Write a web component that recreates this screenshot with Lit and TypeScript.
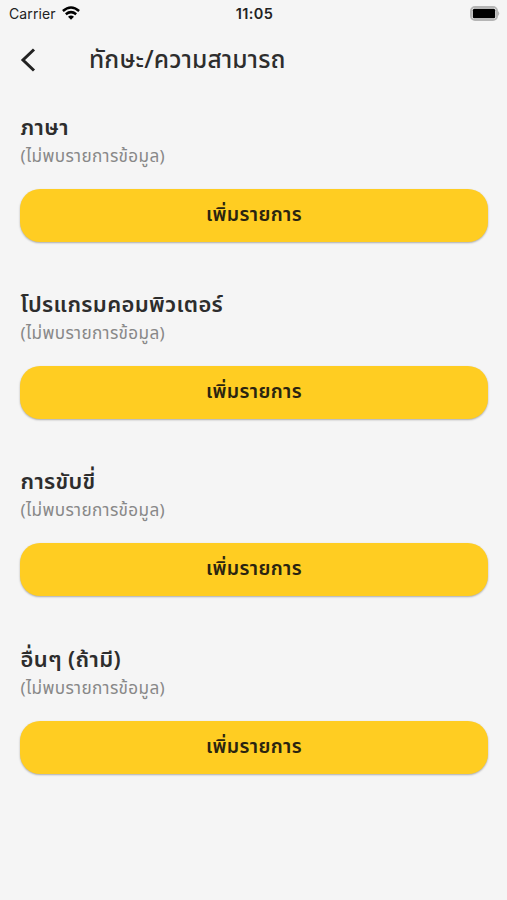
import { LitElement, html, css } from "lit";
import { customElement, property } from "lit/decorators.js";

const font = css`"Noto Sans", "Noto Sans Thai", sans-serif`;

@customElement("status-bar")
class StatusBar extends LitElement {
  static styles = css`
    :host { display: grid; grid-template-columns: 1fr auto 1fr; align-items: center; height: 28px; padding: 0 7px 0 9px; box-sizing: border-box; font: 14px/28px Inter, sans-serif; color: #222; }
    .left { display: flex; align-items: center; gap: 6px; letter-spacing: .1px; }
    .time { font-weight: 600; font-size: 14.5px; letter-spacing: .4px; }
    .battery { justify-self: end; margin-top: -2px; }
    svg { display: block; }
    .wifi { margin-top: -2px; }
  `;
  render() {
    return html`<div class="left"><span>Carrier</span>
      <svg class="wifi" width="18" height="14" viewBox="0 0 18 14" fill="none" stroke="#000" stroke-width="2.5"><path d="M.9 5Q9-2 17.1 5M3.8 8.2Q9 4 14.2 8.2"/><path d="M9 13.8L6 10.8Q9 8.4 12 10.8Z" fill="#000" stroke="none"/></svg></div>
      <span class="time">11:05</span>
      <svg class="battery" width="30" height="15" viewBox="0 0 30 15"><rect x="1" y="1" width="26" height="13" rx="4" fill="#f5f5f5" stroke="#b5b5b5" stroke-width="2"/><rect x="2.8" y="2.8" width="22.4" height="9.4" rx="1.5"/><path d="M28 5Q30.5 7.5 28 10Z" fill="#b5b5b5"/></svg>`;
  }
}

@customElement("skill-section")
class SkillSection extends LitElement {
  @property() heading = "";
  static styles = css`
    :host { display: block; height: 177.2px; font-family: ${font}; letter-spacing: .35px; }
    h2 { margin: 0; padding-left: .5px; font-size: 22px; line-height: 29px; font-weight: 600; color: #2d2d2d; }
    p { margin: 0; padding-left: .5px; font-size: 17.15px; line-height: 30px; color: #888; }
    button { display: block; width: 100%; height: 53px; margin-top: 18px; border: 0; border-radius: 20px; background: #ffcd22; box-shadow: 0 1px 2px rgba(0,0,0,.3); font: 600 19.5px/50px ${font}; letter-spacing: .38px; color: #2a2410; padding: 0 0 4px; }
  `;
  render() {
    return html`<h2>${this.heading}</h2><p>(ไม่พบรายการข้อมูล)</p><button>เพิ่มรายการ</button>`;
  }
}

@customElement("app-root")
class AppRoot extends LitElement {
  static styles = css`
    :host { display: block; height: 900px; background: #f5f5f5; font-family: ${font}; overflow: hidden; }
    header { display: flex; align-items: center; height: 64px; padding-left: 20px; }
    svg { display: block; width: 16px; margin-right: 53px; }
    h1 { margin: -2px 0 0; font-size: 24.5px; line-height: 40px; font-weight: 500; letter-spacing: .2px; color: #2d2d2d; }
    main { padding: 20px 19px 0 20px; }
  `;
  render() {
    return html`<status-bar></status-bar>
      <header><svg width="16" height="24" viewBox="0 0 16 24" fill="none" stroke="#222" stroke-width="3"><path d="M14 1.5L3 12L14 22.5"/></svg><h1>ทักษะ/ความสามารถ</h1></header>
      <main>${["ภาษา", "โปรแกรมคอมพิวเตอร์", "การขับขี่", "อื่นๆ (ถ้ามี)"].map(t => html`<skill-section heading=${t}></skill-section>`)}</main>`;
  }
}
